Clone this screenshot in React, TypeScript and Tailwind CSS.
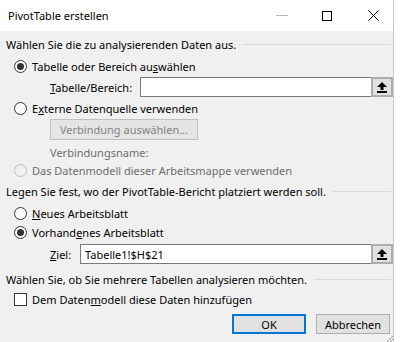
const Radio = ({ checked = false, disabled = false }: { checked?: boolean; disabled?: boolean }) => (
    <span
        className={`w-[13px] h-[13px] rounded-full border flex items-center justify-center shrink-0 ${
            disabled ? "border-[#bcbcbc] bg-[#f0f0f0]" : "border-[#333333] bg-white"
        }`}
    >
        {checked && <span className="w-[7px] h-[7px] rounded-full bg-[#333333]" />}
    </span>
);

const PickButton = () => (
    <div className="w-[22px] h-full bg-[#e1e1e1] border-2 border-[#adadad] flex items-center justify-center shrink-0">
        <svg width="10" height="11" viewBox="0 0 10 11">
            <path d="M5 0 L10 5 L6.5 5 L6.5 8 L3.5 8 L3.5 5 L0 5 Z" fill="#000" />
            <rect x="0" y="9" width="10" height="2" fill="#000" />
        </svg>
    </div>
);

const Section = ({ children }: { children: React.ReactNode }) => (
    <div className="flex items-center h-[20px] pl-[6px] pr-[2px] gap-[7px]">
        <span className="whitespace-nowrap">{children}</span>
        <div className="flex-1 h-px bg-[#dadada]" />
    </div>
);

export default function App() {
    return (
        <div className="w-[400px] h-[342px] bg-white flex font-['Noto_Sans',sans-serif] text-[11px] text-black leading-none overflow-hidden">
            <div className="w-[394px] h-full flex flex-col border-r border-[#c8c8c8] relative">
                <div className="h-[31px] bg-white flex items-center shrink-0">
                    <span className="pl-[8px] text-[11px]">PivotTable erstellen</span>
                    <div className="ml-auto flex items-center h-full">
                        <div className="w-[12px] h-px bg-[#b8b8b8] mr-[34px]" />
                        <div className="w-[10px] h-[10px] border border-black mr-[36px]" />
                        <svg width="11" height="11" viewBox="0 0 11 11" className="mr-[14px]">
                            <path d="M0.5 0.5 L10.5 10.5 M10.5 0.5 L0.5 10.5" stroke="#000" strokeWidth="1" />
                        </svg>
                    </div>
                </div>
                <div className="flex-1 bg-[#f0f0f0] flex flex-col pt-[3px]">
                    <Section>Wählen Sie die zu analysierenden Daten aus.</Section>
                    <div className="flex items-center h-[20px] mt-[2px] pl-[14px] gap-[5px]">
                        <Radio checked />
                        <span>
                            Tabelle oder Bereich au<span className="underline">s</span>wählen
                        </span>
                    </div>
                    <div className="flex items-center h-[20px] mt-[1px] pl-[50px]">
                        <span className="w-[90px]">
                            <span className="underline">T</span>abelle/Bereich:
                        </span>
                        <div className="flex-1 h-full bg-white border border-[#7a7a7a] border-r-0" />
                        <PickButton />
                    </div>
                    <div className="flex items-center h-[20px] mt-[1px] pl-[14px] gap-[5px]">
                        <Radio />
                        <span>
                            E<span className="underline">x</span>terne Datenquelle verwenden
                        </span>
                    </div>
                    <div className="flex h-[21px] mt-[1px] pl-[50px]">
                        <div className="w-[148px] h-full bg-[#e5e5e5] border border-[#bfbfbf] flex items-center justify-center text-[#838383]">
                            Verbindung auswählen...
                        </div>
                    </div>
                    <div className="flex items-center h-[18px] mt-[3px] pl-[50px] text-[#6d6d6d]">
                        Verbindungsname:
                    </div>
                    <div className="flex items-center h-[18px] pl-[14px] gap-[5px] text-[#6d6d6d]">
                        <Radio disabled />
                        <span>Das Datenmodell dieser Arbeitsmappe verwenden</span>
                    </div>
                    <div className="mt-[2px]">
                        <Section>Legen Sie fest, wo der PivotTable-Bericht platziert werden soll.</Section>
                    </div>
                    <div className="flex items-center h-[18px] mt-[3px] pl-[14px] gap-[5px]">
                        <Radio />
                        <span>
                            <span className="underline">N</span>eues Arbeitsblatt
                        </span>
                    </div>
                    <div className="flex items-center h-[20px] pl-[14px] gap-[5px]">
                        <Radio checked />
                        <span>
                            Vorhand<span className="underline">e</span>nes Arbeitsblatt
                        </span>
                    </div>
                    <div className="flex items-center h-[20px] mt-[2px] pl-[50px]">
                        <span className="w-[30px]">
                            <span className="underline">Z</span>iel:
                        </span>
                        <div className="flex-1 h-full bg-white border border-[#7a7a7a] border-r-0 flex items-center pl-[4px]">
                            Tabelle1!$H$21
                        </div>
                        <PickButton />
                    </div>
                    <div className="mt-[5px]">
                        <Section>Wählen Sie, ob Sie mehrere Tabellen analysieren möchten.</Section>
                    </div>
                    <div className="flex items-center h-[20px] pl-[14px] gap-[5px]">
                        <span className="w-[13px] h-[13px] border border-[#333333] bg-white shrink-0" />
                        <span>
                            Dem Daten<span className="underline">m</span>odell diese Daten hinzufügen
                        </span>
                    </div>
                    <div className="flex justify-end gap-[10px] mt-[5px] pr-[3px]">
                        <div className="w-[74px] h-[20px] bg-[#e1e1e1] border-2 border-[#0078d7] flex items-center justify-center">
                            OK
                        </div>
                        <div className="w-[74px] h-[20px] bg-[#e1e1e1] border border-[#adadad] flex items-center justify-center">
                            Abbrechen
                        </div>
                    </div>
                </div>
                <svg width="6" height="6" viewBox="0 0 6 6" className="absolute right-0 bottom-0">
                    <path d="M6 0 L0 6 M6 3 L3 6" stroke="#a0a0a0" strokeWidth="1" />
                </svg>
            </div>
        </div>
    );
}
